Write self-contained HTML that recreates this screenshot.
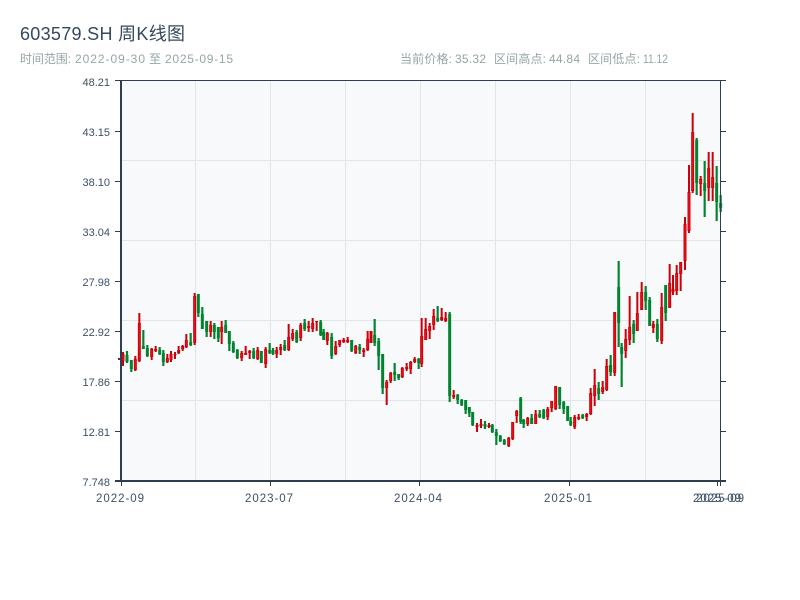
<!DOCTYPE html>
<html><head><meta charset="utf-8">
<style>
html,body{margin:0;padding:0;background:#fff;width:800px;height:600px;overflow:hidden}
svg{display:block}
text{font-family:"Liberation Sans","Noto Sans CJK SC",sans-serif}
.rw{stroke:#cc0008;stroke-width:6;fill:none}
.gw{stroke:#008430;stroke-width:6.5;fill:none}
.rb{stroke:#d00008;stroke-width:9;fill:none}
.ri{stroke:#e8141c;stroke-width:3;fill:none}
.gb{stroke:#008430;stroke-width:9;fill:none}
.yl{font-size:11px;fill:#3d5166;text-anchor:end}
.xl{font-size:11.5px;fill:#3d5166}
.sub{font-size:12px;fill:#95a5a6}
</style></head><body>
<svg width="800" height="600" viewBox="0 0 800 600" xmlns="http://www.w3.org/2000/svg">
<rect width="800" height="600" fill="#fff"/>
<text x="20" y="40" font-size="18" fill="#34495e" textLength="165" lengthAdjust="spacing">603579.SH 周K线图</text>
<text class="sub" x="20" y="63" textLength="51">时间范围:</text>
<text class="sub" x="75" y="63" textLength="70">2022-09-30</text>
<text class="sub" x="149" y="63">至</text>
<text class="sub" x="165" y="63" textLength="68">2025-09-15</text>
<text class="sub" x="400" y="63" textLength="52">当前价格:</text>
<text class="sub" x="455" y="63" textLength="31">35.32</text>
<text class="sub" x="494" y="63" textLength="52">区间高点:</text>
<text class="sub" x="549" y="63" textLength="31">44.84</text>
<text class="sub" x="588" y="63" textLength="52">区间低点:</text>
<text class="sub" x="643" y="63" textLength="25" lengthAdjust="spacingAndGlyphs">11.12</text>

<rect x="121" y="81" width="599" height="400" fill="#f8f9fb"/>
<path d="M195.5 81V481M270.5 81V481M345.5 81V481M420.5 81V481M495.5 81V481M570.5 81V481M645.5 81V481M121 160.5H720M121 240.5H720M121 320.5H720M121 400.5H720" stroke="#e3e5ea" stroke-width="1" fill="none"/>

<!-- candles: segment 1 -->
<g transform="translate(110 280) scale(.33333)">
<path class="gw" d="M51 213V249M64 240V276M100 150V207M112 195V231M149 201V225M160 210V258M242 159V198M265 42V111M277 81V147M290 123V171M313 129V177M325 141V186M347 120V159M358 153V213M370 183V219M382 207V237"/>
<path class="gb" d="M51 225V246M64 240V267M100 198V207M112 204V228M149 210V222M160 219V246M242 186V195M265 42V99M277 102V147M290 123V156M313 135V156M325 141V174M347 135V159M358 153V192M370 189V216M382 210V234"/>
<path class="rw" d="M39 216V258M76 228V273M88 99V246M125 204V240M137 198V216M172 222V249M183 213V246M195 216V237M206 198V222M218 195V213M229 162V204M254 39V195M302 123V171M335 123V192"/>
<path class="rb" d="M39 222V243M76 237V270M88 129V243M125 207V231M137 207V213M172 234V246M183 222V240M195 222V225M206 210V219M218 198V207M229 180V201M254 48V189M302 135V156M335 141V156"/>
<path class="ri" d="M39 225V240M76 240V267M88 132V240M125 210V228M172 237V243M183 225V237M229 183V198M254 51V186M302 138V153M335 144V153"/>
</g>
<!-- segment 2 -->
<g transform="translate(240 300) scale(.33333)">
<path class="gw" d="M41 144V177M64 153V189M89 129V162M99 144V165M134 120V153M170 90V129M194 57V93M242 60V108M251 87V120M275 99V177M335 120V156M359 132V162"/>
<path class="gb" d="M41 153V174M64 153V189M89 150V159M99 150V162M134 135V150M170 96V126M194 69V87M242 66V105M251 96V120M275 111V168M335 120V153M359 141V150"/>
<path class="rw" d="M5 153V183M17 138V165M29 150V177M53 141V180M77 141V204M110 141V174M122 132V165M146 72V153M158 87V123M182 69V123M206 63V96M218 54V96M230 63V93M262 96V135M287 123V165M299 120V141M311 114V129M323 111V129M347 135V162M371 144V171M383 93V153"/>
<path class="rb" d="M5 159V174M17 159V165M29 153V159M53 150V177M77 147V192M110 150V162M122 141V150M146 111V150M158 99V117M182 75V114M206 78V84M218 69V87M230 63V66M262 99V123M287 138V162M299 120V135M311 120V126M323 120V126M347 138V159M371 150V156M383 117V150"/>
<path class="ri" d="M5 162V171M53 153V174M77 150V189M110 153V159M146 114V147M158 102V114M182 78V111M218 72V84M262 102V120M287 141V159M299 123V132M347 141V156M383 120V147"/>
</g>
<!-- segment 3 -->
<g transform="translate(370 300) scale(.33333)">
<path class="gw" d="M14 57V138M26 114V210M38 162V282M74 189V243M86 222V240M146 174V207M203 18V66M239 36V306M263 282V312M275 297V318M287 300V342M298 321V351M308 336V378M345 363V387"/>
<path class="gb" d="M14 105V129M26 123V168M38 162V264M74 216V225M86 222V234M146 177V189M203 54V63M239 42V288M263 285V300M275 300V315M287 300V330M298 321V339M308 336V375M345 372V381"/>
<path class="rw" d="M3 93V129M50 240V315M62 216V249M97 201V234M110 189V213M122 183V222M134 171V189M155 54V201M167 54V120M179 69V117M191 27V90M215 24V63M227 36V66M251 270V297M321 369V396M333 357V384M357 369V384"/>
<path class="rb" d="M3 93V129M50 246V264M62 219V243M97 204V231M110 201V207M122 186V207M134 177V186M155 108V192M167 87V120M179 78V93M191 48V75M215 51V60M227 54V63M251 285V291M321 375V381M333 372V378M357 375V381"/>
<path class="ri" d="M50 249V261M62 222V240M97 207V228M122 189V204M155 111V189M167 90V117M179 81V90M191 51V72"/>
</g>
<!-- segment 4 -->
<g transform="translate(490 340) scale(.33333)">
<path class="gw" d="M7 252V279M19 267V315M31 285V306M43 297V315M92 171V252M101 237V264M125 222V252M149 210V234M161 207V237M209 141V207M221 183V222M233 198V243M242 231V258M278 222V237M326 126V180M360 75V96"/>
<path class="gb" d="M7 255V276M19 276V288M31 288V303M43 300V312M92 174V246M101 240V252M125 234V252M149 222V231M161 210V234M209 141V195M221 186V207M233 198V243M242 243V255M278 225V234M326 144V162"/>
<path class="rw" d="M56 291V321M68 246V300M80 210V249M113 231V258M137 210V252M173 201V240M185 183V216M197 138V210M254 225V267M266 222V240M290 219V243M302 144V225M314 87V198M338 123V162M350 57V153"/>
<path class="rb" d="M56 294V318M68 246V297M80 213V228M113 234V252M137 222V252M173 207V231M185 183V204M197 138V207M254 231V261M266 231V237M290 222V231M302 159V222M314 135V168M338 141V156M350 78V150"/>
<path class="ri" d="M56 297V315M68 249V294M80 216V225M113 237V249M137 225V249M173 210V228M185 186V201M197 141V204M254 234V258M302 162V219M314 138V165M338 144V153M350 81V147"/>
</g>
<!-- segment 5 -->
<g transform="translate(600 250) scale(.33333)">
<path class="gw" d="M32 315V378M56 33V291M65 279V411M101 210V279M137 108V180M149 141V228M172 207V276M197 105V213"/>
<path class="gb" d="M32 345V366M56 111V219M65 291V312M101 222V252M137 126V153M149 150V228M172 222V267M197 105V189"/>
<path class="rw" d="M44 186V378M77 237V324M89 138V285M112 126V243M125 96V180M160 213V249M185 129V282M209 42V174M219 75V135M230 45V135M242 36V123"/>
<path class="rb" d="M44 186V369M77 267V303M89 231V270M112 189V243M125 126V180M160 222V234M185 171V273M209 99V174M219 117V126M230 69V123M242 36V72"/>
<path class="ri" d="M44 189V366M77 270V300M89 234V267M112 192V240M125 129V177M185 174V270M209 102V171M230 72V120M242 39V69"/>
</g>
<!-- segment 6 -->
<g transform="translate(660 100) scale(.33333)">
<path class="gw" d="M110 114V285M134 183V351M170 198V363M182 285V336"/>
<path class="gb" d="M110 120V249M134 249V273M170 249V306M182 309V324"/>
<path class="rw" d="M75 351V510M87 195V399M98 39V279M122 228V288M146 156V303M158 156V303"/>
<path class="rb" d="M75 372V483M87 276V393M98 96V273M122 237V252M146 204V264M158 231V264"/>
<path class="ri" d="M75 375V480M87 279V390M98 99V270M122 240V249M146 207V261M158 234V261"/>
</g>
<path d="M119.5 358V360" stroke="#a01020" stroke-width="3" fill="none"/>

<!-- axes -->
<path d="M115 80.5H726M720.5 80V481" stroke="#2c3e50" stroke-width="1" fill="none"/>
<path d="M121 81V482M115 481H726" stroke="#2c3e50" stroke-width="2" fill="none"/>
<path d="M115 131.5H121M115 181.5H121M115 231.5H121M115 281.5H121M115 331.5H121M115 381.5H121M115 431.5H121M720 131.5H726M720 181.5H726M720 231.5H726M720 281.5H726M720 331.5H726M720 381.5H726M720 431.5H726M121.5 481V486M270.5 481V486M419.5 481V486M569.5 481V486M717.5 481V486M720.5 481V486" stroke="#2c3e50" stroke-width="1" fill="none"/>

<text class="yl" x="110" y="86">48.21</text>
<text class="yl" x="110" y="136">43.15</text>
<text class="yl" x="110" y="186">38.10</text>
<text class="yl" x="110" y="236">33.04</text>
<text class="yl" x="110" y="286">27.98</text>
<text class="yl" x="110" y="336">22.92</text>
<text class="yl" x="110" y="386">17.86</text>
<text class="yl" x="110" y="436">12.81</text>
<text class="yl" x="110" y="486">7.748</text>

<text class="xl" x="96" y="502" textLength="48">2022-09</text>
<text class="xl" x="245" y="502" textLength="48">2023-07</text>
<text class="xl" x="394" y="502" textLength="48">2024-04</text>
<text class="xl" x="544" y="502" textLength="48">2025-01</text>
<text class="xl" x="693" y="502" textLength="48">2025-09</text>
<text class="xl" x="696" y="502" textLength="48">2025-09</text>
</svg>
</body></html>
